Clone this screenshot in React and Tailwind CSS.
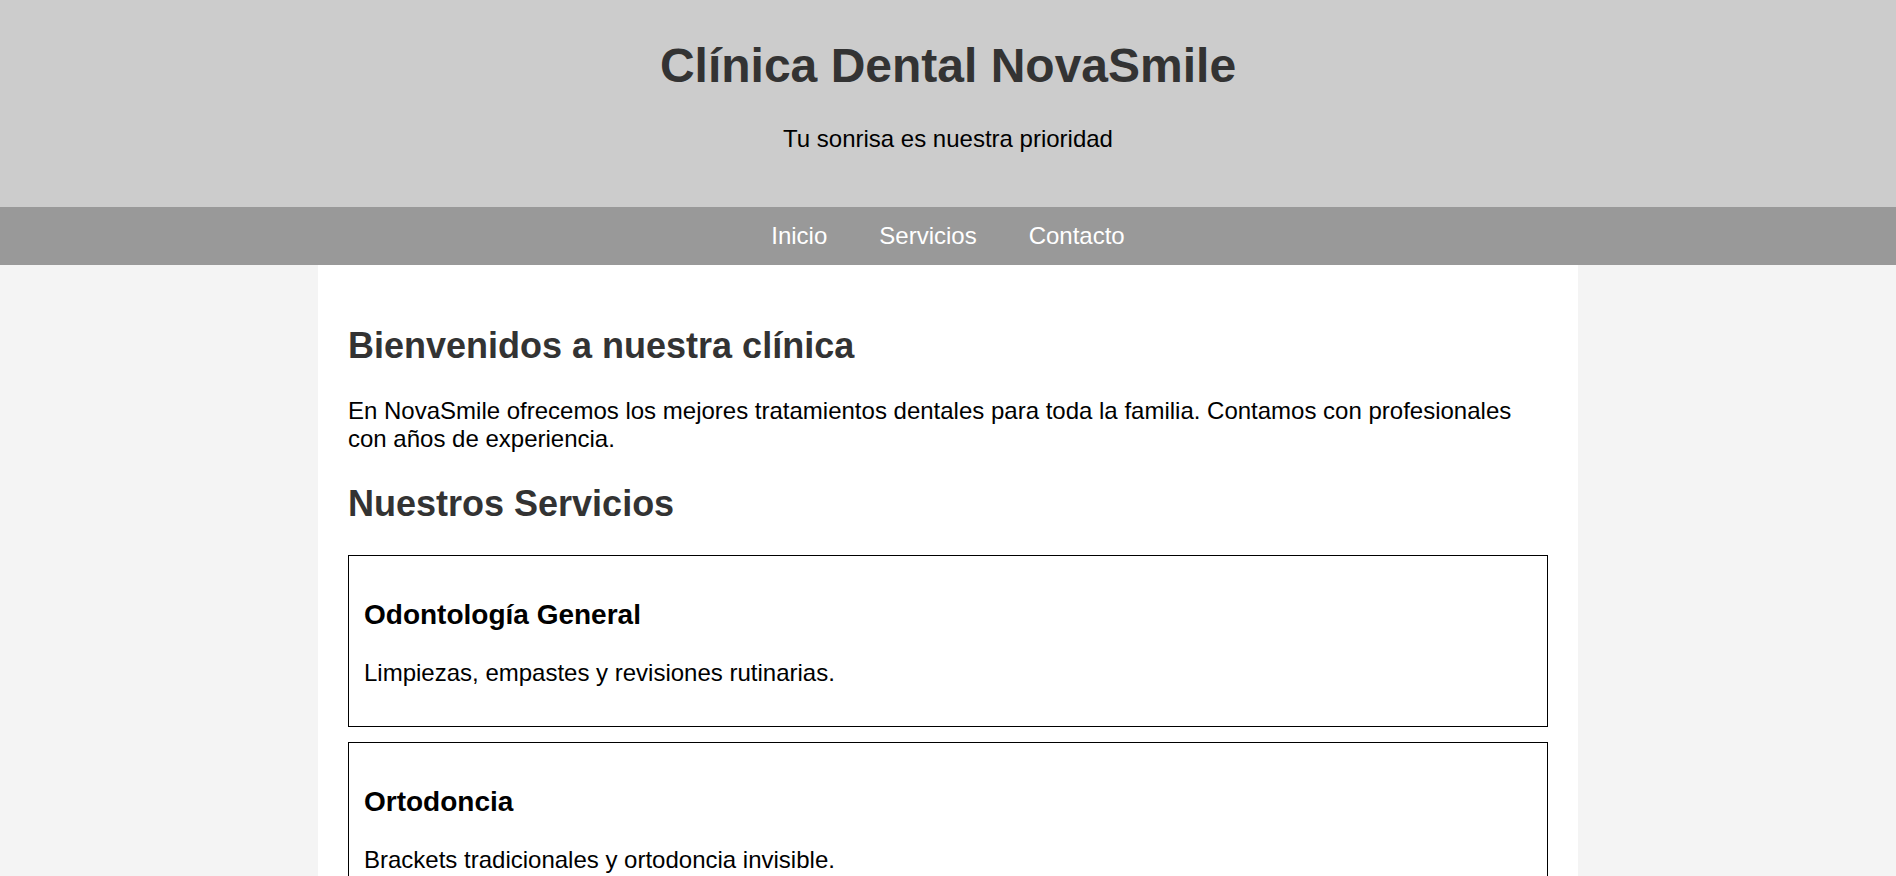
const services = [
  { title: 'Odontología General', text: 'Limpiezas, empastes y revisiones rutinarias.' },
  { title: 'Ortodoncia', text: 'Brackets tradicionales y ortodoncia invisible.' },
  { title: 'Implantes Dentales', text: 'Soluciones permanentes para dientes perdidos.' },
];

const App = () => {
  return (
    <div className="h-screen overflow-hidden bg-[#f4f4f4] font-['Liberation_Sans',Arial,sans-serif] leading-[normal] text-black">
      {/* Header */}
      <header className="bg-[#cccccc] pt-[38px] pb-[54px] text-center">
        <h1 className="mb-[32px] text-[48px] font-bold leading-[normal] text-[#333333]">Clínica Dental NovaSmile</h1>
        <p className="text-[24px] leading-[normal]">Tu sonrisa es nuestra prioridad</p>
      </header>

      {/* Nav */}
      <nav className="flex justify-center gap-[52px] bg-[#999999] py-[15px] text-[24px] leading-[normal] text-white">
        <a href="#">Inicio</a>
        <a href="#">Servicios</a>
        <a href="#">Contacto</a>
      </nav>

      <main className="mx-auto max-w-[1260px] bg-white px-[30px] pt-[60px] pb-[30px]">
        <h2 className="mb-[30px] text-[36px] font-bold leading-[normal] text-[#333333]">Bienvenidos a nuestra clínica</h2>
        <p className="mb-[30px] text-[24px] leading-[normal]">
          En NovaSmile ofrecemos los mejores tratamientos dentales para toda la familia. Contamos con profesionales con años de experiencia.
        </p>

        <h2 className="mb-[30px] text-[36px] font-bold leading-[normal] text-[#333333]">Nuestros Servicios</h2>

        <div className="flex flex-col gap-[15px]">
          {services.map((s) => (
            <div key={s.title} className="border border-black px-[15px] pt-[43px] pb-[39px]">
              <h3 className="mb-[28px] text-[28px] font-bold leading-[normal]">{s.title}</h3>
              <p className="text-[24px] leading-[normal]">{s.text}</p>
            </div>
          ))}
        </div>
      </main>
    </div>
  );
};

export default App;
